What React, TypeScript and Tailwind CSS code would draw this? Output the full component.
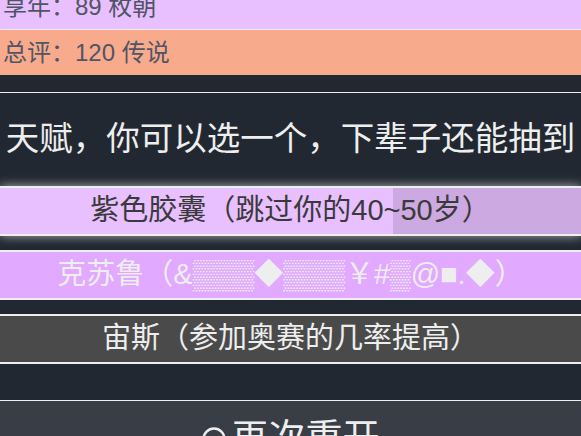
const summary = [
    { label: '享年：89 枚朝', bg: 'bg-[#e8c0ff]' },
    { label: '总评：120 传说', bg: 'bg-[#f8aa8c]' },
];

const talents = [
    {
        name: '紫色胶囊（跳过你的40~50岁）',
        className: 'bg-[linear-gradient(to_right,#e8c0ff_393px,#cda9e1_393px)] text-[#3a3a3a] shadow-[0_0_10px_rgba(238,238,238,0.7)]',
    },
    {
        name: '克苏鲁（&▒▒▒◆▒▒▒￥#▒@■.◆）',
        className: 'bg-[#e1a9ff] text-[#eeeeee]',
    },
    {
        name: '宙斯（参加奥赛的几率提高）',
        className: 'bg-[#4a4a4a] text-[#eeeeee]',
    },
];

export default function App() {
    return (
        <div className="w-[581px] h-[436px] overflow-hidden bg-[#222831] font-['Liberation_Sans','Noto_Sans_CJK_SC',sans-serif]">
            <ul>
                {summary.map((row, i) => (
                    <li
                        key={row.label}
                        className={`${row.bg} ${i === 0 ? '-mt-[16px] h-[46px] border-b border-[#eeeeee]' : 'h-[45px]'} flex items-center pl-[3px] text-[24px] text-[#505565] whitespace-nowrap`}
                    >
                        {row.label}
                    </li>
                ))}
            </ul>

            <div className="mt-[17px] border-t border-[#eeeeee] h-[94px] flex items-center justify-center text-[33.5px] text-[#eeeeee] whitespace-nowrap">
                天赋，你可以选一个，下辈子还能抽到
            </div>

            <ul className="flex flex-col gap-[14px]">
                {talents.map((t) => (
                    <li
                        key={t.name}
                        className={`${t.className} h-[50px] border-y-2 border-[#eeeeee] flex items-center justify-center text-[29px] whitespace-nowrap`}
                    >
                        {t.name}
                    </li>
                ))}
            </ul>

            <button className="mt-[36px] w-full border-t border-[#eeeeee] bg-[#393e46] pt-[18px] pb-[18px] flex items-center justify-center gap-[6px] text-[37px] leading-[40px] text-[#eeeeee]">
                <svg width="24" height="24" viewBox="0 0 24 24" fill="none">
                    <circle cx="12" cy="12" r="10.5" stroke="#eeeeee" strokeWidth="2.5" />
                </svg>
                <span>再次重开</span>
            </button>
        </div>
    );
}
